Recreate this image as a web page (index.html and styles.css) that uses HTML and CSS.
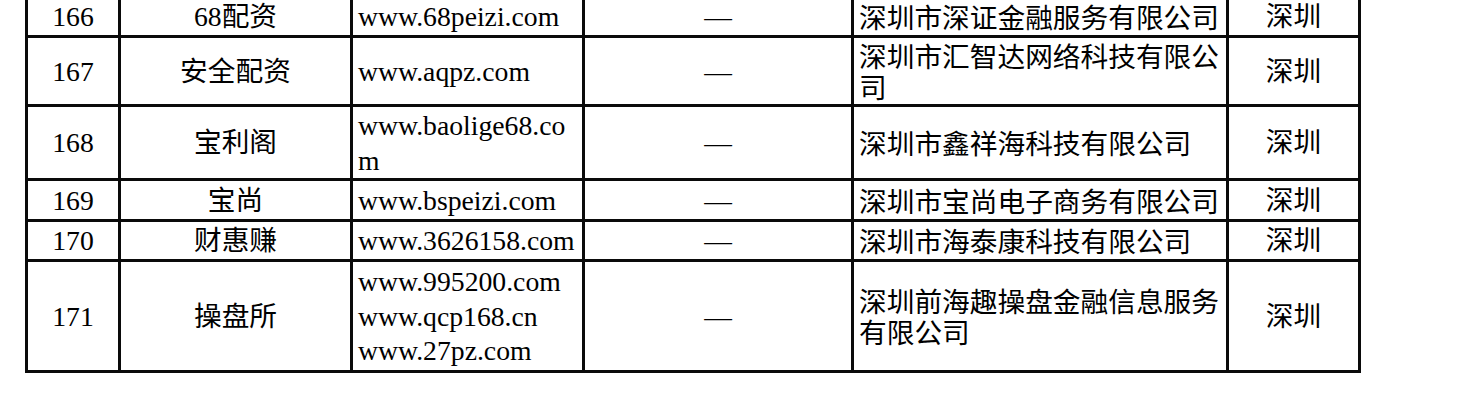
FILE: index.html
```html
<!DOCTYPE html>
<html lang="zh-CN">
<head>
<meta charset="utf-8">
<title>配资平台名单</title>
<link rel="stylesheet" href="styles.css">
</head>
<body>
<div class="page">
<table class="list">
<colgroup>
<col class="c-no"><col class="c-name"><col class="c-url"><col class="c-dash"><col class="c-co"><col class="c-city">
</colgroup>
<tbody>
<tr class="r166">
<td class="ctr">166</td><td class="ctr">68配资</td><td class="url">www.68peizi.com</td><td class="ctr">—</td><td class="co">深圳市深证金融服务有限公司</td><td class="ctr">深圳</td>
</tr>
<tr class="r167">
<td class="ctr">167</td><td class="ctr">安全配资</td><td class="url">www.aqpz.com</td><td class="ctr">—</td><td class="co">深圳市汇智达网络科技有限公司</td><td class="ctr">深圳</td>
</tr>
<tr class="r168">
<td class="ctr">168</td><td class="ctr">宝利阁</td><td class="url">www.baolige68.com</td><td class="ctr">—</td><td class="co">深圳市鑫祥海科技有限公司</td><td class="ctr">深圳</td>
</tr>
<tr class="r169">
<td class="ctr">169</td><td class="ctr">宝尚</td><td class="url">www.bspeizi.com</td><td class="ctr">—</td><td class="co">深圳市宝尚电子商务有限公司</td><td class="ctr">深圳</td>
</tr>
<tr class="r170">
<td class="ctr">170</td><td class="ctr">财惠赚</td><td class="url">www.3626158.com</td><td class="ctr">—</td><td class="co">深圳市海泰康科技有限公司</td><td class="ctr">深圳</td>
</tr>
<tr class="r171">
<td class="ctr">171</td><td class="ctr">操盘所</td><td class="url">www.995200.com<br>www.qcp168.cn<br>www.27pz.com</td><td class="ctr">—</td><td class="co">深圳前海趣操盘金融信息服务有限公司</td><td class="ctr">深圳</td>
</tr>
</tbody>
</table>
</div>
</body>
</html>
```
FILE: styles.css
```css
html, body {
  margin: 0;
  padding: 0;
  background: #fff;
}
.page {
  padding-left: 25px;
  margin-top: -5px;
}
.list {
  border-collapse: collapse;
  table-layout: fixed;
  width: 1336px;
  font-family: "Liberation Serif", "Noto Sans CJK SC", serif;
  font-size: 27.7px;
  color: #000;
}
.c-no { width: 93px; }
.c-name { width: 232px; }
.c-url { width: 232px; }
.c-dash { width: 269px; }
.c-co { width: 375px; }
.c-city { width: 132px; }
.list td {
  border: 3px solid #0a0a0a;
  padding: 2px 5px 0;
  vertical-align: middle;
  line-height: 34.5px;
}
.ctr { text-align: center; }
.url {
  text-align: left;
  word-break: break-all;
}
.list td.co {
  text-align: left;
  line-height: 31px;
  padding: 4px 2px 0 5px;
}
.r166 { height: 40px; }
.r167 { height: 69px; }
.r168 { height: 74px; }
.r169 { height: 41px; }
.r170 { height: 40px; }
.r171 { height: 111px; }
```
